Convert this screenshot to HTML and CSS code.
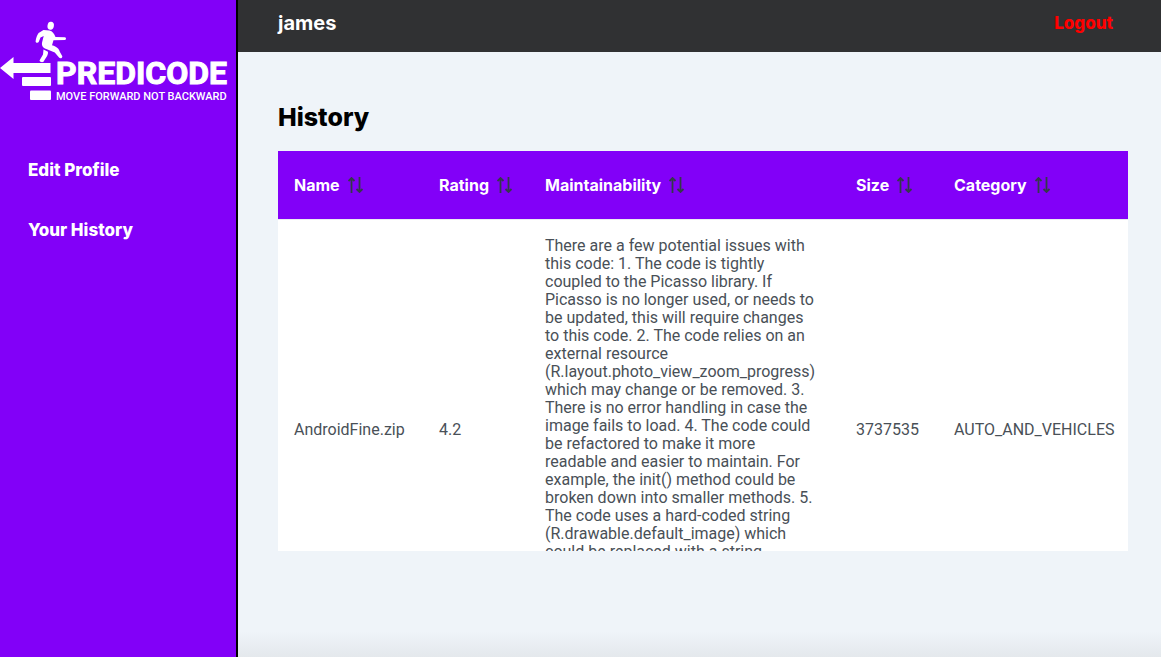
FILE: index.html
```html
<!DOCTYPE html>
<html lang="en">
<head>
<meta charset="utf-8">
<title>Predicode - History</title>
<link rel="stylesheet" href="styles.css">
</head>
<body>
<svg class="sprite" aria-hidden="true">
  <symbol id="sort" viewBox="0 0 16 16">
    <path d="M3.500 16V1M.5 4l3-3 3 3M11.500 0v15M8.500 12l3 3 3-3" fill="none" stroke="currentColor" stroke-width="1.8"/>
  </symbol>
</svg>
<div class="app">
  <aside class="sidebar">
    <svg class="logo" viewBox="0 0 236 90" role="img" aria-label="Predicode, move forward not backward">
      <g fill="#fff">
        <path d="M0 52 13.500 41v6H50.500v10H13.500v6z"/>
        <rect x="22" y="61" width="29" height="9" rx="1"/>
        <rect x="30" y="74.500" width="21" height="9.500" rx="1"/>
        <ellipse cx="50.700" cy="9.800" rx="3.200" ry="4" transform="rotate(10 50.700 9.800)"/>
        <path d="M43.500 14l6 .5c3 .8 4.500 3 6 6.500l9.500.2c1.400.4 1.300 2.600 0 2.800l-11.500.2-1.500 5c5 1.500 7 3.500 7.800 6.500l2.500 4.500c.3 2-2.200 2.700-3.300 1.300l-4.200-5-8.500-3.500c-4-1.500-5-4-4-7.500l1.400-5.500-3.200 1.500-1.800 4.500c-.9 1.400-3.100.8-3.100-.8.3-3 1.500-5.800 3-8.200z"/>
        <path d="M43.500 33.500l4.500 2.200c.4 3-1.500 5-3 7.500l-1.500 2.500c-1.500 1-3.500.2-4-1.200l3.500-6z"/>
      </g>
      <text class="logo-name" x="56" y="68">PREDICODE</text>
      <text class="logo-tag" x="56" y="84">MOVE FORWARD NOT BACKWARD</text>
    </svg>
    <nav class="menu">
      <a href="#profile">Edit Profile</a>
      <a href="#history">Your History</a>
    </nav>
  </aside>
  <div class="page">
    <header class="topbar">
      <span class="user">james</span>
      <a class="logout" href="#logout">Logout</a>
    </header>
    <main class="content">
      <h1>History</h1>
      <div class="table-wrap">
        <table>
          <colgroup><col class="c-name"><col class="c-rating"><col class="c-main"><col class="c-size"><col></colgroup>
          <thead>
            <tr>
              <th><span class="head">Name <svg class="sort"><use href="#sort"/></svg></span></th>
              <th><span class="head">Rating <svg class="sort"><use href="#sort"/></svg></span></th>
              <th><span class="head">Maintainability <svg class="sort"><use href="#sort"/></svg></span></th>
              <th><span class="head">Size <svg class="sort"><use href="#sort"/></svg></span></th>
              <th><span class="head">Category <svg class="sort"><use href="#sort"/></svg></span></th>
            </tr>
          </thead>
          <tbody>
            <tr>
              <td>AndroidFine.zip</td>
              <td>4.2</td>
              <td class="notes">There are a few potential issues with<br>this code: 1. The code is tightly<br>coupled to the Picasso library. If<br>Picasso is no longer used, or needs to<br>be updated, this will require changes<br>to this code. 2. The code relies on an<br>external resource<br>(R.layout.photo_view_zoom_progress)<br>which may change or be removed. 3.<br>There is no error handling in case the<br>image fails to load. 4. The code could<br>be refactored to make it more<br>readable and easier to maintain. For<br>example, the init() method could be<br>broken down into smaller methods. 5.<br>The code uses a hard-coded string<br>(R.drawable.default_image) which<br>could be replaced with a string</td>
              <td>3737535</td>
              <td>AUTO_AND_VEHICLES</td>
            </tr>
          </tbody>
        </table>
      </div>
    </main>
  </div>
</div>
</body>
</html>
```
FILE: styles.css
```css
* { box-sizing: border-box; }
body {
  margin: 0;
  font-family: Inter, "Liberation Sans", sans-serif;
  font-size: 16px;
}
a { text-decoration: none; }
.sprite { display: none; }
.app {
  display: grid;
  grid-template-columns: 238px 1fr;
  min-height: 100vh;
}
.sidebar {
  background: #8200f8;
  border-right: 2px solid #000;
  padding-top: 16px;
}
.logo { display: block; width: 100%; }
.logo-name {
  fill: #fff;
  stroke: #fff;
  stroke-width: 1px;
  font: bold 32px Roboto, sans-serif;
}
.logo-tag {
  fill: #fff;
  font: 500 11px Roboto, sans-serif;
}
.menu {
  display: flex;
  flex-direction: column;
  gap: 40px;
  padding: 54px 28px;
}
.menu a {
  color: #fff;
  font-size: 17px;
  font-weight: 800;
  line-height: 20px;
}
.page {
  min-width: 0;
  background: linear-gradient(to top, #e4e8ec, #eff4f9 26px);
}
.topbar {
  display: flex;
  justify-content: space-between;
  align-items: center;
  height: 52px;
  padding: 0 48px 7px 40px;
  background: #303133;
}
.user { color: #fff; font-size: 20px; font-weight: 700; }
.logout { color: #f00; font-size: 17px; font-weight: 800; }
.content { padding: 49px 33px 40px 40px; }
h1 {
  margin: 0 0 18px;
  font-size: 25px;
  line-height: 32px;
  font-weight: 800;
}
.table-wrap {
  height: 400px;
  overflow: auto;
  scrollbar-width: none;
  background: #fff;
}
table {
  width: 100%;
  table-layout: fixed;
  border-collapse: collapse;
}
.c-name { width: 145px; }
.c-rating { width: 106px; }
.c-main { width: 311px; }
.c-size { width: 98px; }
th {
  height: 68px;
  padding: 0 16px;
  background: #8200f8;
  border-bottom: 1px solid #e9ecef;
  color: #fff;
  font-weight: 700;
  font-size: 16px;
  text-align: left;
}
.head { display: flex; align-items: center; gap: 8px; }
.sort { width: 16px; height: 16px; color: #343a4a; flex: none; }
td {
  height: 420px;
  padding: 17px 16px 15px;
  color: #495057;
  font-family: Roboto, "Liberation Sans", sans-serif;
  line-height: 18px;
  white-space: nowrap;
}
.notes { vertical-align: top; }
```
